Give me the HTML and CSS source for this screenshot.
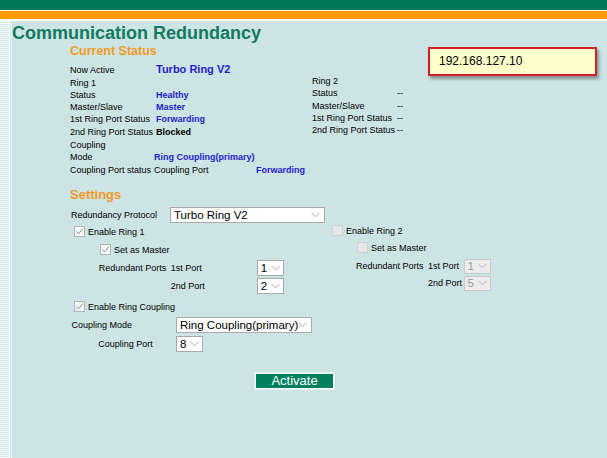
FILE: index.html
```html
<!DOCTYPE html>
<html>
<head>
<meta charset="utf-8">
<title>Communication Redundancy</title>
<link rel="stylesheet" href="styles.css">
</head>
<body>
<div class="bar-green"></div>
<div class="bar-orange"></div>
<div class="page">
  <div class="side"><div class="stripes"></div><div class="rule"></div></div>
  <main class="content">
    <h1 class="title">Communication Redundancy</h1>
    <section class="section">
      <h2 class="heading">Current Status</h2>
      <div class="now">
        <span class="now-lbl">Now Active</span>
        <span class="now-val">Turbo Ring V2</span>
      </div>
      <div class="rings">
        <div class="ring ring1">
          <span>Ring 1</span><span></span>
          <span>Status</span><span class="val">Healthy</span>
          <span>Master/Slave</span><span class="val">Master</span>
          <span>1st Ring Port Status</span><span class="val">Forwarding</span>
          <span>2nd Ring Port Status</span><span class="val black">Blocked</span>
        </div>
        <div class="ring ring2">
          <span>Ring 2</span><span></span>
          <span>Status</span><span>--</span>
          <span>Master/Slave</span><span>--</span>
          <span>1st Ring Port Status</span><span>--</span>
          <span>2nd Ring Port Status</span><span>--</span>
        </div>
      </div>
      <div class="cstat">
        <span>Coupling</span><span></span><span></span>
        <span>Mode</span><span class="val span2">Ring Coupling(primary)</span>
        <span>Coupling Port status</span><span>Coupling Port</span><span class="val">Forwarding</span>
      </div>

      <h2 class="heading settings">Settings</h2>
      <div class="proto">
        <span class="proto-lbl">Redundancy Protocol</span>
        <div class="sel sel-proto"><span>Turbo Ring V2</span><svg class="chev" width="9" height="6" viewBox="0 0 9 6"><path d="M0.5 0.8 L4.5 4.8 L8.5 0.8" fill="none" stroke="#a8a8a8" stroke-width="1"/></svg></div>
      </div>

      <div class="rs-wrap">
        <div class="rs rs1">
          <div class="cbrow"><span class="cb"><svg width="9" height="9" viewBox="0 0 9 9"><path d="M1.5 4.5 L3.6 6.8 L7.8 1.6" fill="none" stroke="#8a8a8a" stroke-width="1"/></svg></span><span>Enable Ring 1</span></div>
          <div class="cbrow indent"><span class="cb"><svg width="9" height="9" viewBox="0 0 9 9"><path d="M1.5 4.5 L3.6 6.8 L7.8 1.6" fill="none" stroke="#8a8a8a" stroke-width="1"/></svg></span><span>Set as Master</span></div>
          <div class="ports">
            <span class="rp">Redundant Ports</span><span class="pl">1st Port</span>
            <div class="sel sel-sm"><span>1</span><svg class="chev" width="9" height="6" viewBox="0 0 9 6"><path d="M0.5 0.8 L4.5 4.8 L8.5 0.8" fill="none" stroke="#a8a8a8" stroke-width="1"/></svg></div>
            <span></span><span class="pl">2nd Port</span>
            <div class="sel sel-sm"><span>2</span><svg class="chev" width="9" height="6" viewBox="0 0 9 6"><path d="M0.5 0.8 L4.5 4.8 L8.5 0.8" fill="none" stroke="#a8a8a8" stroke-width="1"/></svg></div>
          </div>
        </div>
        <div class="rs rs2">
          <div class="cbrow"><span class="cb dis"></span><span>Enable Ring 2</span></div>
          <div class="cbrow indent"><span class="cb dis"></span><span>Set as Master</span></div>
          <div class="ports">
            <span class="rp">Redundant Ports</span><span class="pl">1st Port</span>
            <div class="sel sel-sm dis"><span>1</span><svg class="chev" width="9" height="6" viewBox="0 0 9 6"><path d="M0.5 0.8 L4.5 4.8 L8.5 0.8" fill="none" stroke="#b8b8b8" stroke-width="1"/></svg></div>
            <span></span><span class="pl">2nd Port</span>
            <div class="sel sel-sm dis"><span>5</span><svg class="chev" width="9" height="6" viewBox="0 0 9 6"><path d="M0.5 0.8 L4.5 4.8 L8.5 0.8" fill="none" stroke="#b8b8b8" stroke-width="1"/></svg></div>
          </div>
        </div>
      </div>

      <div class="coup">
        <div class="cbrow"><span class="cb"><svg width="9" height="9" viewBox="0 0 9 9"><path d="M1.5 4.5 L3.6 6.8 L7.8 1.6" fill="none" stroke="#8a8a8a" stroke-width="1"/></svg></span><span>Enable Ring Coupling</span></div>
        <div class="crow">
          <span class="c-lbl">Coupling Mode</span>
          <div class="sel sel-mode"><span>Ring Coupling(primary)</span><svg class="chev" width="9" height="6" viewBox="0 0 9 6"><path d="M0.5 0.8 L4.5 4.8 L8.5 0.8" fill="none" stroke="#a8a8a8" stroke-width="1"/></svg></div>
        </div>
        <div class="crow">
          <span class="c-lbl c-ind">Coupling Port</span>
          <div class="sel sel-sm"><span>8</span><svg class="chev" width="9" height="6" viewBox="0 0 9 6"><path d="M0.5 0.8 L4.5 4.8 L8.5 0.8" fill="none" stroke="#a8a8a8" stroke-width="1"/></svg></div>
        </div>
      </div>

      <div class="act-row"><button class="activate">Activate</button></div>
    </section>
  </main>
</div>
<div class="ip-note">192.168.127.10</div>
</body>
</html>
```

FILE: styles.css
```css
* { box-sizing: border-box; }

body {
  margin: 0;
  width: 607px;
  height: 458px;
  overflow: hidden;
  position: relative;
  background: #cde4e4;
  font-family: "Liberation Sans", Arial, sans-serif;
  color: #000;
}

.bar-green {
  height: 11px;
  background: #00785a;
  border-bottom: 1px solid #ffffff;
}

.bar-orange {
  height: 10px;
  background: #ff9900;
  border-bottom: 2px solid #ffffff;
}

.page {
  display: flex;
  height: 437px;
}

.side {
  display: flex;
  width: 12px;
  flex: none;
}

.stripes {
  width: 9px;
  background: repeating-linear-gradient(to bottom, #fbfefe 0 1px, #d2e8e8 1px 2px);
}

.rule {
  width: 3px;
  background: linear-gradient(to right, #f2f9f9 0 1px, #d4e8e8 1px 2px, #e6f2f2 2px 3px);
}

.content {
  flex: 1;
}

.title {
  margin: 2px 0 0;
  font-size: 18px;
  line-height: 21px;
  font-weight: bold;
  color: #127a5e;
}

.section {
  margin-left: 58px;
  font-size: 9px;
}

.heading {
  margin: 0;
  font-size: 12.5px;
  line-height: 15px;
  font-weight: bold;
  color: #f59a1f;
}

.now {
  display: flex;
  align-items: baseline;
  height: 17.5px;
  padding-top: 1.5px;
  line-height: 16px;
}

.now-lbl {
  width: 86px;
  font-size: 9px;
}

.now-val {
  font-size: 11px;
  font-weight: bold;
  color: #1f22c9;
}

.rings {
  display: flex;
}

.ring {
  display: grid;
  line-height: 12.3px;
}

.ring1 {
  width: 242px;
  grid-template-columns: 86px auto;
  align-content: start;
}

.ring2 {
  grid-template-columns: 85px auto;
  margin-top: -1.5px;
  align-content: start;
}

.val {
  color: #1f22c9;
  font-weight: bold;
}

.val.black {
  color: #000;
}

.cstat {
  display: grid;
  grid-template-columns: 84px 102px auto;
  line-height: 12.3px;
  margin-top: 1px;
}

.span2 {
  grid-column: span 2;
}

.heading.settings {
  margin-top: 11px;
  font-size: 13px;
  line-height: 16px;
}

.proto {
  display: flex;
  align-items: center;
  height: 16px;
  margin-top: 4px;
}

.proto-lbl {
  width: 100px;
  padding-left: 1px;
}

.sel {
  display: flex;
  align-items: center;
  justify-content: space-between;
  height: 16px;
  background: #ffffff;
  border: 1px solid #a9a9a9;
  font-size: 11.5px;
  white-space: nowrap;
  padding: 0 4px 0 3px;
  color: #000;
  flex: none;
}

.sel > span {
  white-space: nowrap;
}

.sel.dis {
  background: #ececec;
  border-color: #c8c8c8;
  color: #9a9a9a;
}

.chev {
  flex: none;
}

.sel-proto {
  width: 155px;
}

.sel-mode {
  width: 136px;
}

.sel-sm {
  width: 27px;
  padding-left: 3px;
  padding-right: 3px;
}

.rs-wrap {
  display: flex;
  margin-top: 2px;
}

.rs1 {
  width: 262px;
  padding-left: 4px;
}

.rs2 {
  margin-top: -1px;
}

.cbrow {
  display: flex;
  align-items: center;
  height: 14px;
}

.cbrow.indent {
  margin-left: 26px;
  margin-top: 4px;
}

.rs2 .cbrow.indent {
  margin-left: 25px;
  margin-top: 3px;
}

.cb {
  display: flex;
  align-items: center;
  justify-content: center;
  width: 11px;
  height: 11px;
  margin-right: 3px;
  background: #f7f7f7;
  border: 1px solid #b4b4b4;
  flex: none;
}

.cb.dis {
  background: #e6e6e6;
  border-color: #d0d0d0;
}

.ports {
  display: grid;
  grid-template-columns: 72px 86px auto;
  grid-auto-rows: 16px;
  row-gap: 1.5px;
  align-items: center;
  margin-top: 3.5px;
  margin-left: 24.7px;
}

.rs2 .ports {
  grid-template-columns: 72px 35.5px auto;
  grid-auto-rows: 15px;
  row-gap: 2px;
  margin-left: 24px;
  margin-top: 4px;
}

.rs2 .sel {
  height: 15px;
}

.coup {
  margin-top: 6px;
}

.coup > .cbrow {
  margin-left: 4px;
}

.crow {
  display: flex;
  align-items: center;
  height: 16px;
  margin-top: 2.8px;
}

.crow + .crow {
  margin-top: 3px;
}

.c-lbl {
  width: 106px;
  padding-left: 1.5px;
}

.c-ind {
  padding-left: 28.3px;
}

.act-row {
  display: flex;
  margin-top: 21.5px;
  padding-left: 185px;
}

.activate {
  width: 79px;
  height: 16px;
  padding: 0;
  background: #00805f;
  color: #ffffff;
  border: 1px solid #ffffff;
  outline: 1px solid #e4f1f1;
  font-family: "Liberation Sans", Arial, sans-serif;
  font-size: 13px;
  line-height: 14px;
}

.ip-note {
  position: absolute;
  left: 428px;
  top: 47px;
  width: 169px;
  height: 29px;
  background: #ffffcc;
  border: 2px solid #cf1f2b;
  box-shadow: 2px 3px 3px rgba(0, 0, 0, 0.35);
  padding-left: 9px;
  font-size: 12px;
  line-height: 25px;
}
```
